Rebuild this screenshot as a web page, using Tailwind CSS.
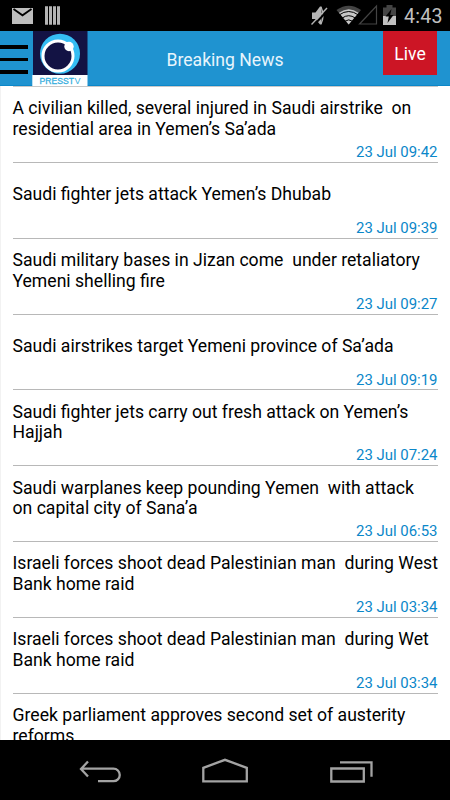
<!DOCTYPE html>
<html lang="en">

<head>
    <meta charset="UTF-8">
    <meta name="viewport" content="width=device-width, initial-scale=1.0">
    <title>Breaking News</title>
    <script src="https://cdn.jsdelivr.net/npm/@tailwindcss/browser@4"></script>
</head>

<body class="bg-black font-[Roboto,sans-serif]">
    <div class="w-[450px] h-[800px] flex flex-col overflow-hidden">
        <!-- Status bar -->
        <div class="h-[31px] shrink-0 bg-black">
            <svg class="block" width="450" height="31" viewBox="0 0 450 31">
                <rect x="12" y="8" width="21" height="16" fill="#bebebe" />
                <path d="M13.5 9l9 6.3 9-6.3" fill="none" stroke="#000" stroke-width="1.8" />
                <path d="M45 6.3h3v18.5h-3zM49 6.3h3v18.5h-3zM53 6.3h3v18.5h-3zM57 6.3h3v18.5h-3z" fill="#b4b4b4" />
                <!-- Muted speaker -->
                <path d="M312 12.5h3.500l4.500-6h1.500v18h-1.500l-4.500-5.500h-3.500z" fill="#b4b4b4" />
                <path d="M321 7q4 8.500 0 17" fill="none" stroke="#b4b4b4" stroke-width="1.300" />
                <path d="M313 26L329 9" stroke="#000" stroke-width="2" />
                <path d="M311.500 24.500L327 8" stroke="#b4b4b4" stroke-width="1.400" />
                <!-- Wifi -->
                <path d="M348.700 24.500L336.500 10Q348.700 1.500 361 10z" fill="#444" />
                <path d="M348.700 24.500L339 12.800Q348.700 5.800 358.500 12.800z" fill="#c8c8c8" />
                <path d="M339 15Q348.700 8 358.500 15M342 18.200Q348.700 13.200 355.500 18.200M344.800 21.300Q348.700 18.400 352.700 21.300" fill="none" stroke="#000" stroke-width="1" />
                <!-- Signal -->
                <path d="M376.500 6v18h-17z" fill="none" stroke="#444" stroke-width="1.200" />
                <!-- Battery -->
                <path d="M383 7.500h3.500V5h6v2.500h3.500v9h-13z" fill="#444" />
                <path d="M383 16h13v9h-13z" fill="#c0c0c0" />
                <path d="M391.500 9l-6 7.500h3.300l-1.300 6.500 6-8h-3.300z" fill="#000" />
                <text x="404" y="23" fill="#c0c0c0" font-family="Roboto, sans-serif" font-size="19.500" textLength="38.500">4:43</text>
            </svg>
        </div>

        <!-- Header -->
        <div class="relative h-[55px] shrink-0 bg-[#1f93d0] border-b border-[#0b87c9] flex items-start">
            <div class="w-7 pt-3.5 flex flex-col gap-[9px]">
                <div class="h-[3.500px] bg-black"></div>
                <div class="h-[3.500px] bg-black"></div>
                <div class="h-[3.500px] bg-black"></div>
            </div>
            <svg class="ml-1 shrink-0" width="56" height="55" viewBox="32 31 56 55">
                <rect x="33" y="31" width="54.500" height="44" fill="#131344" />
                <rect x="32.300" y="75" width="55.200" height="11" fill="#fff" />
                <circle cx="60" cy="53.700" r="20" fill="#35bdf3" />
                <circle cx="58" cy="56" r="15" fill="#131344" stroke="#fff" stroke-width="3" />
                <circle cx="69" cy="46.500" r="4.700" fill="#fff" />
                <text x="39.500" y="84" fill="#35aede" font-family="Liberation Sans, sans-serif" font-size="9" stroke="#35aede" stroke-width="0.300" textLength="34.500" lengthAdjust="spacingAndGlyphs">PRESST</text>
                <text x="74.500" y="84" fill="#35aede" font-family="Liberation Sans, sans-serif" font-size="9">V</text>
            </svg>
            <h1 class="absolute inset-x-0 top-[17px] text-center text-[17.600px] leading-6 text-[#e8f5fc]">Breaking News</h1>
            <div class="absolute left-[383px] top-0 w-[54px] h-11 bg-[#cc1525] text-white text-[17.600px] leading-[46px] text-center">Live</div>
        </div>

        <!-- News list -->
        <div class="flex-1 min-h-0 overflow-hidden bg-white border-l border-[#f2f2f2] pl-[11.500px] pr-[12.500px]">
            <div class="h-px bg-[#c8c8c8]"></div>
            <div id="newsList"></div>
        </div>

        <!-- Navigation bar -->
        <div class="h-[60px] shrink-0 bg-black">
            <svg class="block" width="450" height="60" viewBox="0 740 450 60" fill="none" stroke="#a3a3a3" stroke-width="2.300">
                <path d="M88 761.500l-7 7.500 7 7.500M81 768.700h32.500a6 6 0 0 1 0 12.500H98" />
                <path d="M203.300 767.800v13.500h43.500v-13.500l-21.800-8z" />
                <path d="M331.300 768.500h32.500v13h-32.500zM340 762.300h31.500v14.500" />
            </svg>
        </div>
    </div>

    <script>
        const news = [
            ['A civilian killed, several injured in Saudi airstrike  on\nresidential area in Yemen’s Sa’ada', '23 Jul 09:42'],
            ['Saudi fighter jets attack Yemen’s Dhubab', '23 Jul 09:39'],
            ['Saudi military bases in Jizan come  under retaliatory\nYemeni shelling fire', '23 Jul 09:27'],
            ['Saudi airstrikes target Yemeni province of Sa’ada', '23 Jul 09:19'],
            ['Saudi fighter jets carry out fresh attack on Yemen’s\nHajjah', '23 Jul 07:24'],
            ['Saudi warplanes keep pounding Yemen  with attack\non capital city of Sana’a', '23 Jul 06:53'],
            ['Israeli forces shoot dead Palestinian man  during West\nBank home raid', '23 Jul 03:34'],
            ['Israeli forces shoot dead Palestinian man  during Wet\nBank home raid', '23 Jul 03:34'],
            ['Greek parliament approves second set of austerity\nreforms', ''],
        ];

        document.getElementById('newsList').innerHTML = news.map(([title, time]) => `
            <div class="h-[75.850px] border-b border-[#b8b8b8] flex flex-col">
                <p class="h-[64px] shrink-0 flex items-center whitespace-pre text-[17.610px] leading-[20.700px] text-black">${title}</p>
                <p class="-mt-[9px] text-right text-[14.950px] leading-5 text-[#0b87c9]">${time}</p>
            </div>`).join('');
    </script>
</body>

</html>
